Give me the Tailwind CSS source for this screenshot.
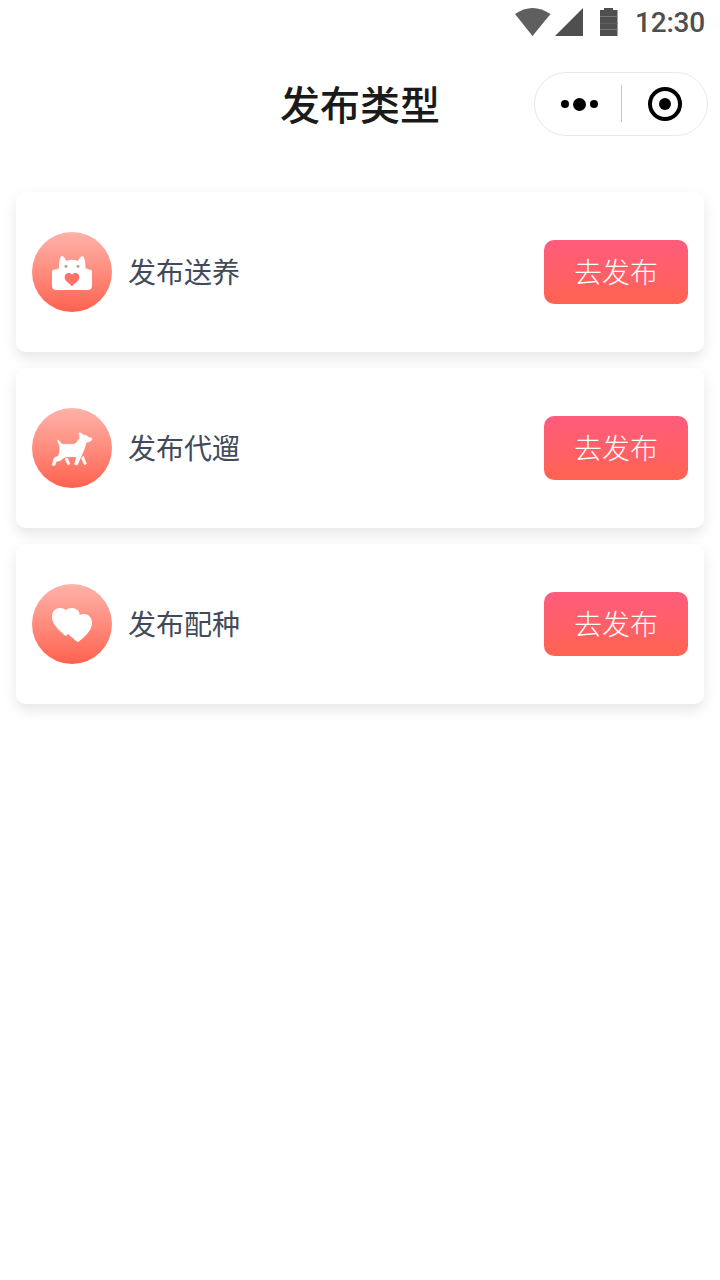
<!DOCTYPE html>
<html lang="zh-CN">
<head>
    <meta charset="UTF-8">
    <meta name="viewport" content="width=device-width, initial-scale=1.0">
    <title>发布类型</title>
    <script src="https://cdn.jsdelivr.net/npm/@tailwindcss/browser@4"></script>
</head>
<body class="min-h-screen bg-white font-['Noto_Sans_CJK_SC',sans-serif]">
    <!-- Status bar -->
    <div class="flex h-12 items-start justify-end pr-[15px] pt-2">
        <svg class="h-7 w-[110px]" viewBox="0 0 110 28">
            <path fill="#5f5f5f" d="M0 6Q17.500 -6 35.500 6L17.500 28Z" />
            <path fill="#4f4f4f" d="M68 0V28H40Z" />
            <path fill="#4f4f4f" d="M89 0H98V2H102.500V28H85V2H89Z" />
            <path stroke="#777" d="M85 8.500H102.500M85 21.500H102.500" />
            <path stroke="#606060" d="M85 15.500H102.500" />
        </svg>
        <span class="ml-[10px] w-[70px] whitespace-nowrap font-[Roboto] text-[28px] font-medium leading-[30px] tracking-[-0.2px] text-[#4f4f4f]">12:30</span>
    </div>

    <!-- Title bar -->
    <header class="grid h-28 grid-cols-[1fr_auto_1fr] items-start">
        <div></div>
        <h1 class="pt-[26px] text-[40px] font-medium leading-[58px] text-[#1a1a1a]">发布类型</h1>
        <div class="mr-3 mt-6 flex h-16 w-[174px] items-center justify-self-end rounded-full border border-[#e8e8e8] bg-white">
            <div class="flex w-[86px] items-center justify-center gap-1 pl-0.5">
                <span class="size-2 rounded-full bg-black"></span>
                <span class="size-[13px] rounded-full bg-black"></span>
                <span class="size-2 rounded-full bg-black"></span>
            </div>
            <div class="mb-px h-[37px] w-px bg-[#c8c8c8]"></div>
            <div class="flex flex-1 justify-center pb-px">
                <div class="flex size-[34px] items-center justify-center rounded-full border-4 border-black">
                    <span class="size-3 rounded-full bg-black"></span>
                </div>
            </div>
        </div>
    </header>

    <!-- Publish types -->
    <main class="flex flex-col gap-4 px-4 pt-8">
        <div class="flex h-40 items-center rounded-[10px] bg-white px-4 shadow-[0_6px_14px_rgba(0,0,0,0.10)]">
            <div class="flex size-20 items-center justify-center rounded-full bg-linear-to-b from-[#ffb2aa] to-[#ff604e]">
                <svg class="size-[60px]" viewBox="0 0 180 180">
                    <path fill="#fff" d="M51 79C50 64 53 48 58 43C64 39 69 50 73 57Q90 49 108 57C112 49 118 39 124 44C129 50 131 64 130 78L147 84Q150 85 150 89V131Q150 144 137 144H43Q30 144 30 131V89Q30 85 34 83Z" />
                    <path stroke="#ffb3aa" stroke-width="1.5" d="M31 84L51 80M130 80L149 84" />
                    <circle cx="72" cy="73" r="4.500" fill="#b3a39c" />
                    <circle cx="108" cy="73" r="4.500" fill="#b3a39c" />
                    <path fill="#ff7164" d="M90 98C84 90 68 92 68 106C68 117 82 124 88 131Q90 133 92 131C98 124 112 117 112 106C112 92 96 90 90 98Z" />
                </svg>
            </div>
            <span class="ml-4 pb-0.5 text-[28px] leading-10 text-[#414a5a]">发布送养</span>
            <button class="ml-auto h-16 w-36 rounded-[10px] bg-linear-to-b from-[#ff5b7d] to-[#ff6350] pb-0.5 text-[28px] font-light text-white">去发布</button>
        </div>

        <div class="flex h-40 items-center rounded-[10px] bg-white px-4 shadow-[0_6px_14px_rgba(0,0,0,0.10)]">
            <div class="flex size-20 items-center justify-center rounded-full bg-linear-to-b from-[#ffb2aa] to-[#ff604e]">
                <svg class="size-[60px]" viewBox="0 0 180 180">
                    <g fill="#fff" stroke="#fff" stroke-width="2" stroke-linejoin="round">
                        <path d="M46 67Q49 65 51 68L60 79H96Q102 78 105 72L114 60L111 47Q112 42 117 46L124 51L134 53L138 58L148 60Q151 65 147 68Q142 72 133 72L127 92L122 104L115 120L107 139Q102 143 98 139L104 116H77Q69 116 63 121L55 128L43 130L39 141Q35 144 31 141L36 120L48 115L53 103L53 83Z" />
                        <path d="M69 123L76 120L83 136Q82 141 77 139Z" />
                        <path d="M119 121L124 114L133 137Q131 141 126 139Z" />
                    </g>
                </svg>
            </div>
            <span class="ml-4 pb-0.5 text-[28px] leading-10 text-[#414a5a]">发布代遛</span>
            <button class="ml-auto h-16 w-36 rounded-[10px] bg-linear-to-b from-[#ff5b7d] to-[#ff6350] pb-0.5 text-[28px] font-light text-white">去发布</button>
        </div>

        <div class="flex h-40 items-center rounded-[10px] bg-white px-4 shadow-[0_6px_14px_rgba(0,0,0,0.10)]">
            <div class="flex size-20 items-center justify-center rounded-full bg-linear-to-b from-[#ffb2aa] to-[#ff604e]">
                <svg class="size-[60px]" viewBox="0 0 180 180">
                    <path fill="#fff" d="M72 49C62 38 30 38 30 69C30 91 50 108 67 123Q72 128 76 122L79 120C86 128 96 135 103 142Q107 145 111 142C129 127 150 109 150 87C150 62 128 55 113 63C112 40 83 37 72 49Z" />
                </svg>
            </div>
            <span class="ml-4 pb-0.5 text-[28px] leading-10 text-[#414a5a]">发布配种</span>
            <button class="ml-auto h-16 w-36 rounded-[10px] bg-linear-to-b from-[#ff5b7d] to-[#ff6350] pb-0.5 text-[28px] font-light text-white">去发布</button>
        </div>
    </main>
</body>
</html>
